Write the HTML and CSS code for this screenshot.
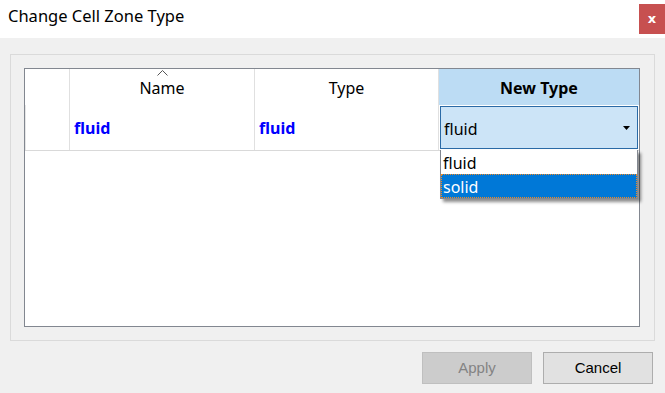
FILE: index.html
```html
<!DOCTYPE html>
<html>
<head>
<meta charset="utf-8">
<link rel="stylesheet" href="styles.css">
</head>
<body>
<div class="window">
  <div class="titlebar">
    <div class="title">Change Cell Zone Type</div>
    <div class="close">x</div>
  </div>
  <div class="content">
    <div class="group">
      <div class="table">
        <div class="row head">
          <div class="cell c0"></div>
          <div class="cell c1 hcell">
            <svg class="sort" width="11" height="6" viewBox="0 0 11 6"><polyline points="0.5,5.5 5.5,0.5 10.5,5.5" fill="none" stroke="#555" stroke-width="1"/></svg>
            Name
          </div>
          <div class="cell c2 hcell">Type</div>
          <div class="cell c3 hcell sel">New Type</div>
        </div>
        <div class="row data">
          <div class="cell c0 rowhead"></div>
          <div class="cell c1 val">fluid</div>
          <div class="cell c2 val">fluid</div>
          <div class="cell c3 combo-cell">
            <div class="combo">
              <span>fluid</span>
              <svg class="arrow" width="7" height="4" viewBox="0 0 7 4"><polygon points="0,0 7,0 3.5,4" fill="#000"/></svg>
            </div>
            <div class="dropdown">
              <div class="opt">fluid</div>
              <div class="opt active">solid</div>
            </div>
          </div>
        </div>
      </div>
    </div>
    <div class="buttons">
      <div class="btn disabled">Apply</div>
      <div class="btn">Cancel</div>
    </div>
  </div>
</div>
</body>
</html>
```
FILE: styles.css
```css
html, body {
  margin: 0;
  padding: 0;
}
body {
  width: 665px;
  height: 393px;
  background: #f0f0f0;
  font-family: "Noto Sans", "Open Sans", sans-serif;
  overflow: hidden;
}
.window {
  display: flex;
  flex-direction: column;
  height: 393px;
}
.titlebar {
  height: 38px;
  background: #ffffff;
  display: flex;
  justify-content: space-between;
  align-items: flex-start;
}
.title {
  padding-left: 8px;
  padding-top: 5px;
  font-size: 16.5px;
  color: #000;
  line-height: 22px;
}
.close {
  margin-top: 4px;
  width: 26px;
  height: 30px;
  background: #c75050;
  color: #fff;
  font-family: "DejaVu Sans", sans-serif;
  font-weight: bold;
  font-size: 13px;
  line-height: 29px;
  text-align: center;
}
.content {
  padding: 16px 11px 0 10px;
  display: flex;
  flex-direction: column;
}
.group {
  width: 630px;
  height: 272px;
  border: 1px solid #dadada;
  padding: 13px 0 0 13px;
}
.table {
  width: 614px;
  height: 257px;
  border: 1px solid #828790;
  background: #ffffff;
}
.row {
  display: flex;
}
.row.head {
  height: 36px;
}
.row.data {
  height: 45px;
  border-bottom: 1px solid #d9d9d9;
}
.cell {
  box-sizing: border-box;
  border-right: 1px solid #e0e0e0;
  position: relative;
}
.c0 { width: 45px; }
.c1 { width: 185px; }
.c2 { width: 184px; }
.c3 { width: 200px; border-right: none; }
.rowhead {
  border-left: 1px solid #e6e6e6;
}
.hcell {
  text-align: center;
  font-size: 16px;
  line-height: 20px;
  padding-top: 9px;
  color: #000;
}
.hcell.sel {
  background: #bcdcf4;
  font-weight: bold;
}
.sort {
  position: absolute;
  left: 87px;
  top: 1px;
}
.val {
  color: #0000ff;
  font-weight: bold;
  font-size: 16px;
  line-height: 20px;
  padding: 13px 0 0 4px;
}
.combo-cell {
  padding: 1px 1px 0 1px;
}
.combo {
  box-sizing: border-box;
  width: 198px;
  height: 43px;
  border: 1px solid #2a6aa6;
  background: #cce4f7;
  display: flex;
  align-items: center;
  justify-content: space-between;
  padding: 0 7px 0 3px;
  font-size: 16px;
  color: #000;
}
.combo span {
  padding-top: 2px;
}
.dropdown {
  position: absolute;
  left: 1px;
  top: 45px;
  width: 198px;
  box-sizing: border-box;
  border: 1px solid #828790;
  border-top: none;
  background: #fff;
  box-shadow: 3px 3px 3px rgba(0, 0, 0, 0.45);
  z-index: 2;
}
.opt {
  height: 24px;
  line-height: 26px;
  padding-left: 2px;
  font-size: 16px;
  color: #000;
}
.opt.active {
  background: #0078d7;
  color: #fff;
  outline: 1px dotted #f08a24;
  outline-offset: -1px;
}
.buttons {
  display: flex;
  justify-content: flex-end;
  gap: 11px;
  margin-top: 11px;
  padding-right: 1px;
}
.btn {
  box-sizing: border-box;
  width: 110px;
  height: 32px;
  border: 1px solid #adadad;
  background: #e1e1e1;
  font-family: "Liberation Sans", Arial, sans-serif;
  font-size: 15px;
  line-height: 30px;
  text-align: center;
  color: #000;
}
.btn.disabled {
  background: #cccccc;
  border-color: #bfbfbf;
  color: #838383;
}
```
